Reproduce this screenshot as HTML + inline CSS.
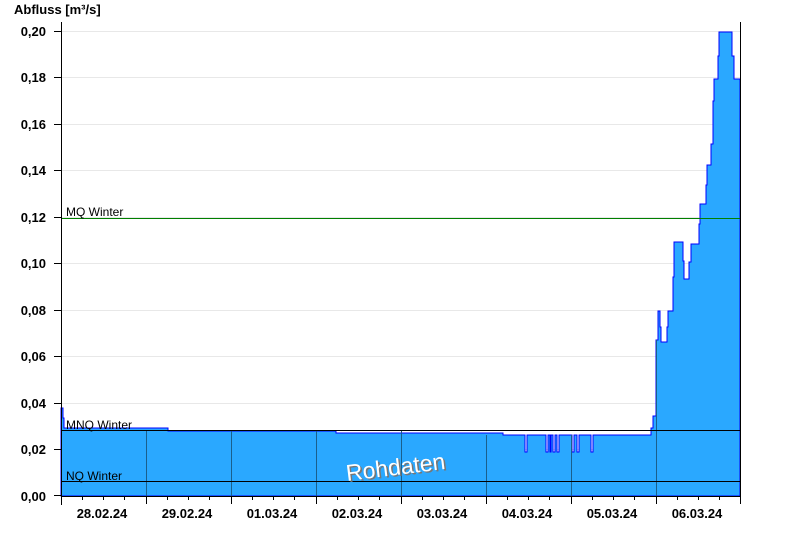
<!DOCTYPE html>
<html><head><meta charset="utf-8"><style>
html,body{margin:0;padding:0;background:#fff;width:800px;height:550px;overflow:hidden}
svg text{font-family:"Liberation Sans",Arial,sans-serif}
</style></head><body>
<svg width="800" height="550" xmlns="http://www.w3.org/2000/svg">
<g stroke="#e8e8e8" stroke-width="1">
<line x1="61" y1="31.5" x2="740" y2="31.5"/><line x1="61" y1="77.5" x2="740" y2="77.5"/>
<line x1="61" y1="124.5" x2="740" y2="124.5"/><line x1="61" y1="170.5" x2="740" y2="170.5"/>
<line x1="61" y1="217.5" x2="740" y2="217.5"/><line x1="61" y1="263.5" x2="740" y2="263.5"/>
<line x1="61" y1="310.5" x2="740" y2="310.5"/><line x1="61" y1="356.5" x2="740" y2="356.5"/>
<line x1="61" y1="403.5" x2="740" y2="403.5"/><line x1="61" y1="449.5" x2="740" y2="449.5"/>
</g>
<polygon fill="#2aa8ff" stroke="#0000ff" stroke-width="1" points="61,496 61,408 63,408 63,418 64,418 64,428 168,428 168,431 336,431 336,433 503,433 503,435 525,435 525,452 527,452 527,435 546,435 546,452 548,452 548,435 550,435 550,452 551,452 551,435 553,435 553,452 555,452 555,435 557,435 557,452 559,452 559,435 572,435 572,452 574,452 574,435 577,435 577,452 579,452 579,435 591,435 591,452 593,452 593,435 651,435 651,428 653,428 653,416 656,416 656,340 658,340 658,311 660,311 660,327 661,327 661,342 667,342 667,327 668,327 668,311 673,311 673,277 674,277 674,242 683,242 683,261 684,261 684,279 689,279 689,262 691,262 691,244 699,244 699,224 700,224 700,204 706,204 706,185 707,185 707,165 711,165 711,144 713,144 713,101 714,101 714,79 718,79 718,56 719,56 719,32 732,32 732,56 734,56 734,79 740,79 740,496"/>
<g stroke="#1a5f8c" stroke-width="1">
<line x1="146.5" y1="430" x2="146.5" y2="496"/><line x1="231.5" y1="430" x2="231.5" y2="496"/>
<line x1="316.5" y1="430" x2="316.5" y2="496"/><line x1="401.5" y1="430" x2="401.5" y2="496"/>
<line x1="486.5" y1="435" x2="486.5" y2="496"/><line x1="571.5" y1="435" x2="571.5" y2="496"/>
<line x1="656.5" y1="340" x2="656.5" y2="496"/>
</g>
<line x1="61" y1="218.5" x2="740" y2="218.5" stroke="#008000" stroke-width="1"/>
<line x1="61" y1="430.5" x2="740" y2="430.5" stroke="#000" stroke-width="1"/>
<line x1="61" y1="481.5" x2="740" y2="481.5" stroke="#000" stroke-width="1"/>
<g font-size="12" fill="#000">
<text x="66" y="216">MQ Winter</text>
<text x="66" y="429">MNQ Winter</text>
<text x="66" y="480">NQ Winter</text>
</g>
<g transform="translate(347,481) rotate(-7)" font-size="23">
<text x="1.5" y="1.5" fill="#777">Rohdaten</text>
<text x="0" y="0" fill="#fff">Rohdaten</text>
</g>
<line x1="61.5" y1="22" x2="61.5" y2="505" stroke="#000"/>
<line x1="740.5" y1="22" x2="740.5" y2="496" stroke="#000"/>
<line x1="61" y1="496.5" x2="741" y2="496.5" stroke="#000"/>
<g stroke="#000">
<line x1="54" y1="31.5" x2="61" y2="31.5"/><line x1="54" y1="77.5" x2="61" y2="77.5"/>
<line x1="54" y1="124.5" x2="61" y2="124.5"/><line x1="54" y1="170.5" x2="61" y2="170.5"/>
<line x1="54" y1="217.5" x2="61" y2="217.5"/><line x1="54" y1="263.5" x2="61" y2="263.5"/>
<line x1="54" y1="310.5" x2="61" y2="310.5"/><line x1="54" y1="356.5" x2="61" y2="356.5"/>
<line x1="54" y1="403.5" x2="61" y2="403.5"/><line x1="54" y1="449.5" x2="61" y2="449.5"/>
<line x1="54" y1="495.5" x2="61" y2="495.5"/>
<path d="M146.5 496V504M231.5 496V504M316.5 496V504M401.5 496V504M486.5 496V504M571.5 496V504M656.5 496V504M740.5 496V504"/>
<path d="M82.5 496V500M103.5 496V500M124.5 496V500M167.5 496V500M188.5 496V500M209.5 496V500M252.5 496V500M273.5 496V500M294.5 496V500M337.5 496V500M358.5 496V500M379.5 496V500M422.5 496V500M443.5 496V500M464.5 496V500M507.5 496V500M528.5 496V500M549.5 496V500M592.5 496V500M613.5 496V500M634.5 496V500M677.5 496V500M698.5 496V500M719.5 496V500"/>
</g>
<g font-size="13" font-weight="bold" fill="#000" text-anchor="end">
<text x="46" y="36">0,20</text><text x="46" y="82">0,18</text><text x="46" y="129">0,16</text>
<text x="46" y="175">0,14</text><text x="46" y="222">0,12</text><text x="46" y="268">0,10</text>
<text x="46" y="315">0,08</text><text x="46" y="361">0,06</text><text x="46" y="408">0,04</text>
<text x="46" y="454">0,02</text><text x="46" y="501">0,00</text>
</g>
<text x="14" y="14" font-size="13" font-weight="bold">Abfluss [m³/s]</text>
<g font-size="13" font-weight="bold" text-anchor="middle">
<text x="102" y="518">28.02.24</text><text x="187" y="518">29.02.24</text>
<text x="272" y="518">01.03.24</text><text x="357" y="518">02.03.24</text>
<text x="442" y="518">03.03.24</text><text x="527" y="518">04.03.24</text>
<text x="612" y="518">05.03.24</text><text x="697" y="518">06.03.24</text>
</g>
</svg>
</body></html>
